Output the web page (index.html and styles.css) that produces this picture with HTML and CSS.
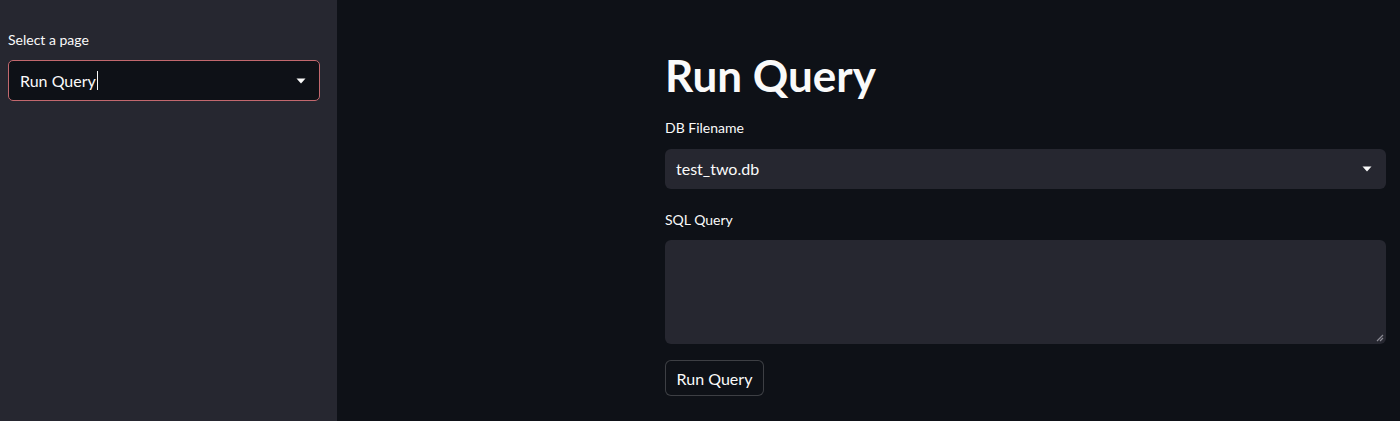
FILE: index.html
```html
<!DOCTYPE html>
<html>
<head>
<meta charset="utf-8">
<link rel="stylesheet" href="styles.css">
</head>
<body>
<div class="app">
  <aside class="sidebar">
    <div class="label">Select a page</div>
    <div class="select select-focus">
      <span class="value">Run Query</span><span class="cursor"></span>
      <svg class="caret" width="10" height="6" viewBox="0 0 10 6"><path d="M0.5 0.5 L9.5 0.5 L5 5.5 Z" fill="#fafafa"/></svg>
    </div>
  </aside>
  <main class="main">
    <div class="content">
      <h1 class="title">Run Query</h1>
      <div class="label label-db">DB Filename</div>
      <div class="select select-main">
        <span class="value">test_two.db</span>
        <svg class="caret" width="10" height="6" viewBox="0 0 10 6"><path d="M0.5 0.5 L9.5 0.5 L5 5.5 Z" fill="#fafafa"/></svg>
      </div>
      <div class="label label-sql">SQL Query</div>
      <div class="textarea">
        <svg class="grip" width="9" height="9" viewBox="0 0 9 9"><path d="M8 2 L2 8 M8 5 L5 8" stroke="#8a8a92" stroke-width="1.2"/></svg>
      </div>
      <button class="btn">Run Query</button>
    </div>
  </main>
</div>
</body>
</html>
```
FILE: styles.css
```css
* { box-sizing: border-box; }
html, body { margin: 0; padding: 0; }
body {
  font-family: Lato, "Open Sans", "DejaVu Sans", sans-serif;
  color: #fafafa;
  background: #0e1117;
  width: 1400px;
  height: 421px;
  overflow: hidden;
}
.app { display: flex; height: 421px; }
.sidebar {
  width: 337px;
  flex: none;
  background: #262730;
  padding: 31px 17px 0 8px;
}
.label {
  font-size: 14px;
  line-height: 18px;
  color: #fafafa;
  margin-bottom: 11px;
}
.select {
  display: flex;
  align-items: center;
  height: 41px;
  border-radius: 6px;
  padding: 0 12px 0 12px;
  font-size: 16px;
  position: relative;
}
.select .value { line-height: 20px; }
.select .caret { margin-left: auto; }
.select-focus {
  background: #0e1117;
  border: 1px solid #c2686e;
  border-radius: 5px;
  padding-left: 11px;
  padding-right: 13px;
}
.cursor {
  display: inline-block;
  width: 1px;
  height: 19px;
  background: #fafafa;
  margin-left: 1px;
}
.main { flex: 1; display: flex; justify-content: flex-start; }
.content {
  margin-left: 328px;
  width: 721px;
  padding-top: 48px;
}
.title {
  font-size: 44px;
  font-weight: 700;
  line-height: 54px;
  margin: 0 0 17px 0;
  letter-spacing: 0;
}
.label-db { margin-bottom: 12px; }
.select-main {
  background: #262730;
  height: 40px;
  padding-left: 11px;
  padding-right: 14px;
  margin-bottom: 22px;
}
.label-sql { margin-bottom: 11px; }
.textarea {
  background: #262730;
  height: 104px;
  border-radius: 6px;
  position: relative;
  margin-bottom: 16px;
}
.grip { position: absolute; right: 2px; bottom: 2px; }
.btn {
  display: block;
  font-family: inherit;
  font-size: 16px;
  color: #fafafa;
  background: #0e1117;
  border: 1px solid rgba(250, 250, 250, 0.2);
  border-radius: 6px;
  height: 36px;
  width: 99px;
  padding: 0;
}
```
